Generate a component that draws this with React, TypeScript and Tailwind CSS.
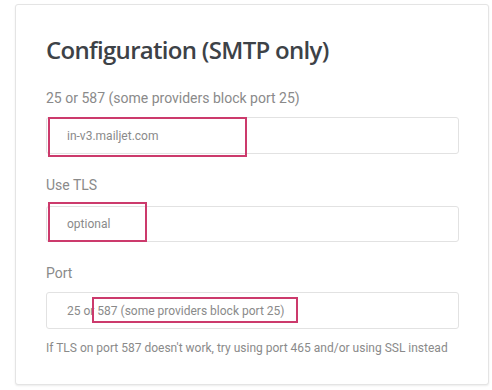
import type { ReactNode } from "react";

interface FieldProps {
  label: string;
  value: string;
  inputClass: string;
  mark: string;
}

function Field({ label, value, inputClass, mark }: FieldProps) {
  return (
    <div>
      <div className="text-[14px] leading-[20px] text-[#8a8a8a]">{label}</div>
      <div
        className={`relative flex w-[413px] items-center rounded-[3px] border border-[#e2e2e2] bg-white pl-[20px] text-[12px] text-[#8a8a8a] ${inputClass}`}
      >
        {value}
        <span className={`pointer-events-none absolute border-2 border-[#cc3a6c] ${mark}`} />
      </div>
    </div>
  );
}

function Card({ children }: { children: ReactNode }) {
  return (
    <div className="h-[381px] w-[474px] rounded-[3px] border border-[#e4e4e4] bg-white pl-[30px] pt-[28px] shadow-[0_1px_2px_rgba(0,0,0,0.08)]">
      {children}
    </div>
  );
}

export default function App() {
  return (
    <div
      className="h-[390px] w-[492px] overflow-hidden bg-white pl-[15px] pt-[4px]"
      style={{ fontFamily: "Roboto, 'Liberation Sans', sans-serif" }}
    >
      <Card>
        <h1
          className="text-[24px] font-semibold leading-[34px] tracking-[-0.7px] text-[#3d4247]"
          style={{ fontFamily: "'Open Sans', 'Liberation Sans', sans-serif" }}
        >
          Configuration (SMTP only)
        </h1>
        <div className="mt-[21px]">
          <Field
            label="25 or 587 (some providers block port 25)"
            value="in-v3.mailjet.com"
            inputClass="mt-[9px] h-[37px]"
            mark="left-px top-[-1px] h-[40px] w-[199px]"
          />
        </div>
        <div className="mt-[21px]">
          <Field
            label="Use TLS"
            value="optional"
            inputClass="mt-[11px] h-[36px]"
            mark="left-px top-[-5px] h-[40px] w-[99px]"
          />
        </div>
        <div className="mt-[21px]">
          <Field
            label="Port"
            value="25 or 587 (some providers block port 25)"
            inputClass="mt-[9px] h-[37px]"
            mark="left-[45px] top-[4px] h-[26px] w-[206px]"
          />
        </div>
        <p className="mt-[11px] text-[12px] leading-[16px] text-[#8a8a8a]">
          If TLS on port 587 doesn't work, try using port 465 and/or using SSL instead
        </p>
      </Card>
    </div>
  );
}
